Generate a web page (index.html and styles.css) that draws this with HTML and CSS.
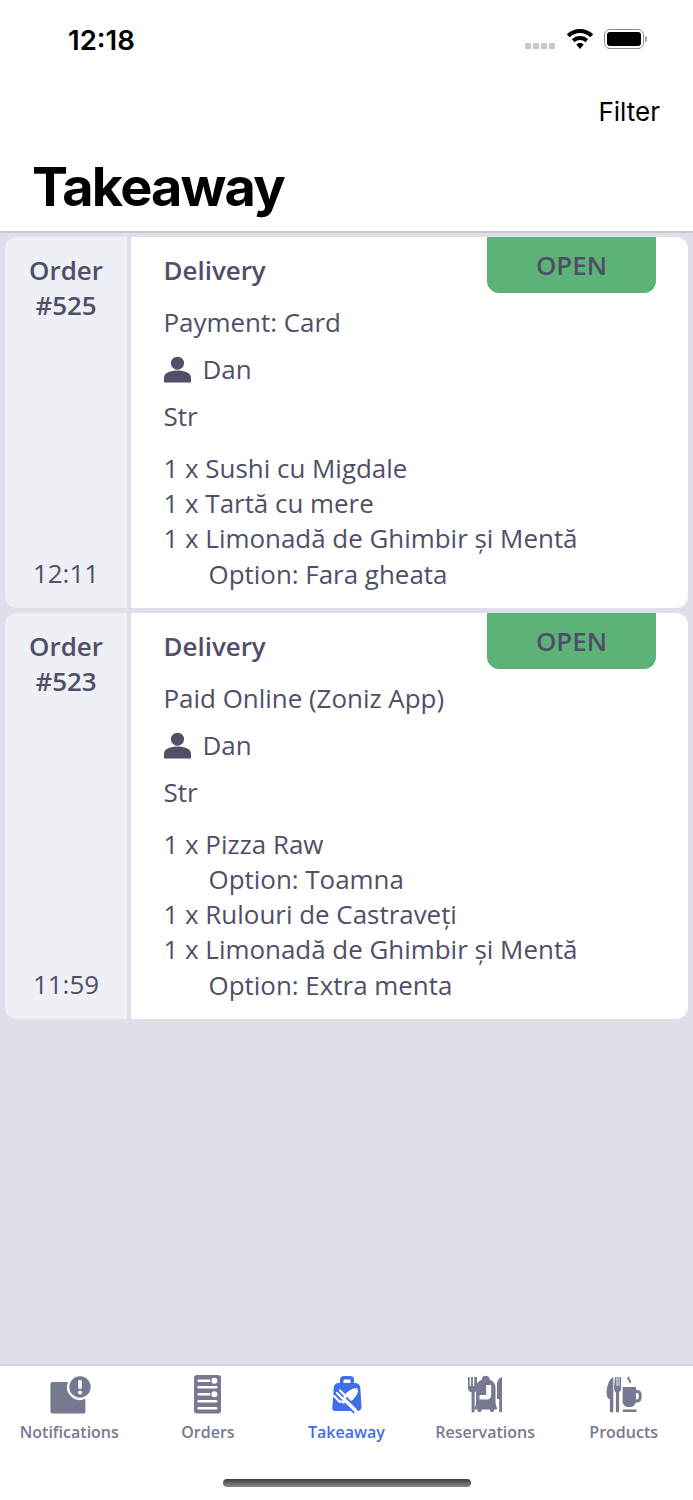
FILE: index.html
```html
<!DOCTYPE html>
<html lang="ro">
<head>
    <meta charset="UTF-8">
    <meta name="viewport" content="width=device-width, initial-scale=1.0">
    <title>Takeaway</title>
    <link rel="stylesheet" href="styles.css">
</head>
<body>

    <header class="top">
        <div class="status-bar">
            <span class="clock">12:18</span>
            <div class="status-icons">
                <div class="signal"><i></i><i></i><i></i><i></i></div>
                <svg class="wifi" width="28" height="20" viewBox="0 0 28 20">
                    <path d="M14 0C8.800 0 4.200 2 .8 5.300l2.900 3C6.400 5.700 10 4.100 14 4.100s7.600 1.600 10.300 4.200l2.900-3C23.800 2 19.200 0 14 0z"/>
                    <path d="M14 7c-3.200 0-6.100 1.200-8.200 3.300l2.900 3C10 11.900 11.900 11.100 14 11.100s4 .8 5.300 2.200l2.900-3C20.100 8.200 17.200 7 14 7z"/>
                    <path d="M14 14c-1.500 0-2.800.6-3.700 1.500L14 20l3.700-4.500C16.800 14.600 15.500 14 14 14z"/>
                </svg>
                <div class="battery"><div class="battery-fill"></div></div>
            </div>
        </div>
        <div class="filter-row">Filter</div>
        <h1>Takeaway</h1>
    </header>

    <main class="orders">
        <div class="card">
            <div class="card-side">
                <div class="order-no">Order<br>#525</div>
                <div>12:11</div>
            </div>
            <div class="card-body">
                <div class="badge">OPEN</div>
                <div class="type">Delivery</div>
                <div class="payment">Payment: Card</div>
                <div class="customer">
                    <svg width="27" height="27" viewBox="0 0 28 27"><circle cx="14" cy="7" r="6.800"/><path d="M0 27v-5c0-5 7-7.500 14-7.500s14 2.500 14 7.500v5z"/></svg>
                    Dan
                </div>
                <div class="address">Str</div>
                <div class="items">
                    <div>1 x Sushi cu Migdale</div>
                    <div>1 x Tartă cu mere</div>
                    <div>1 x Limonadă de Ghimbir și Mentă</div>
                    <div class="option">Option: Fara gheata</div>
                </div>
            </div>
        </div>

        <div class="card">
            <div class="card-side">
                <div class="order-no">Order<br>#523</div>
                <div>11:59</div>
            </div>
            <div class="card-body">
                <div class="badge">OPEN</div>
                <div class="type">Delivery</div>
                <div class="payment">Paid Online (Zoniz App)</div>
                <div class="customer">
                    <svg width="27" height="27" viewBox="0 0 28 27"><circle cx="14" cy="7" r="6.800"/><path d="M0 27v-5c0-5 7-7.500 14-7.500s14 2.500 14 7.500v5z"/></svg>
                    Dan
                </div>
                <div class="address">Str</div>
                <div class="items">
                    <div>1 x Pizza Raw</div>
                    <div class="option">Option: Toamna</div>
                    <div>1 x Rulouri de Castraveți</div>
                    <div>1 x Limonadă de Ghimbir și Mentă</div>
                    <div class="option">Option: Extra menta</div>
                </div>
            </div>
        </div>
    </main>

    <footer class="tabbar">
        <nav class="tabs">
            <div class="tab">
                <svg width="44" height="40" viewBox="0 0 44 40">
                    <path d="M5.400 7H21A13 13 0 0 0 38.400 23.800V36.500a2 2 0 0 1-2 2H5.400a2 2 0 0 1-2-2V9a2 2 0 0 1 2-2z"/>
                    <circle cx="33" cy="12" r="10.700"/>
                    <rect x="31.200" y="5" width="3.600" height="9" rx="1.300" fill="#fff"/>
                    <circle cx="33" cy="17.500" r="2" fill="#fff"/>
                </svg>
                <span>Notifications</span>
            </div>
            <div class="tab">
                <svg width="44" height="40" viewBox="0 0 44 40">
                    <rect x="8" y="0" width="27" height="38.500" rx="3"/>
                    <g fill="#fff">
                        <rect x="11.400" y="4.400" width="13" height="2.600" rx="1.300"/>
                        <circle cx="28.400" cy="5.700" r="3"/>
                        <rect x="11.400" y="11" width="20" height="2.600" rx="1.300"/>
                        <rect x="11.400" y="18" width="13" height="2.600" rx="1.300"/>
                        <circle cx="28.400" cy="19.300" r="3"/>
                        <rect x="11.400" y="25" width="20" height="2.600" rx="1.300"/>
                        <rect x="11.400" y="32" width="20" height="2.600" rx="1.300"/>
                    </g>
                </svg>
                <span>Orders</span>
            </div>
            <div class="tab active">
                <svg width="44" height="40" viewBox="0 0 44 40">
                    <path d="M16 8V5a4 4 0 0 1 4-4h6a4 4 0 0 1 4 4v3h1.500c2.500 0 4.300 1.700 4.700 4l1.300 19c.3 3-1.500 5-4.500 5H12c-3 0-4.800-2-3.500-5l1.300-19c.4-2.300 2.200-4 4.700-4zM19.500 8h7V5.500a1 1 0 0 0-1-1h-5a1 1 0 0 0-1 1z" fill-rule="evenodd"/>
                    <path d="M33 13c-5 0-12 4-14.500 11l-.5 4 3 2c6-3 12-8 13-14z" fill="#fff"/>
                    <path d="M20 24l12 12" stroke="#3f6fe8" stroke-width="7" fill="none"/>
                    <g stroke="#fff" fill="none" stroke-linecap="round">
                        <path d="M20 24l11.500 11.500" stroke-width="3.400"/>
                        <path d="M10 21l6 6M13 18l6 6M16 15.500l6 6" stroke-width="2.200"/>
                        <path d="M14.500 26l5.500 1" stroke-width="2.200"/>
                    </g>
                </svg>
                <span>Takeaway</span>
            </div>
            <div class="tab">
                <svg width="44" height="40" viewBox="0 0 44 40">
                    <path d="M5 2h1.700v9h1.400V2h1.800v9h1.400V2H14v11c0 2-1 3.500-2.400 4.500V36a1.500 1.500 0 0 1-3 0V17.500C6 16.500 5 15 5 13z"/>
                    <path d="M39 2v35h-2.800V24H34V9c0-3 2-6 5-7z"/>
                    <path d="M23.500 1a3.300 3.300 0 0 1 3.200 3.800c3.300 1 5.800 4 5.800 8V26c0 3 .6 5.200 1.500 6.800.4 1 0 1.700-1 1.700h-1.700l-.9 2.500h-2.600l-1-2.500h-8l-1 2.500h-2.600l-.9-2.500h-1.700c-1 0-1.400-.7-1-1.700.9-1.600 1.500-3.800 1.500-6.800V12.800c0-4 2.500-7 5.800-8A3.300 3.300 0 0 1 23.500 1z"/>
                    <path d="M23.200 10h5v9.500c0 2.800-1.400 5-4.500 5h-7.200v-4.500h6.700z" fill="#fff"/>
                </svg>
                <span>Reservations</span>
            </div>
            <div class="tab">
                <svg width="44" height="40" viewBox="0 0 44 40">
                    <path d="M11.300 2v34a1.700 1.700 0 0 1-3.400 0V24C6 24 4.600 22 4.600 18c0-7 2.500-14 6.700-16z"/>
                    <path d="M13 2h1.500v9h.9V2h1.200v9h.9V2h1.600v11c0 2-.8 3.300-2 4.200V36a1.600 1.600 0 0 1-3.200 0V17.200c-1.200-.9-1.900-2.200-1.900-4.200z"/>
                    <path d="M20.600 12H34v3h1c3 0 4.600 1.700 4.600 4.500v3c0 3-2 5-4.600 5h-1.200c-.7 2.700-2.800 4.500-5.800 4.500h-2c-3 0-5.400-2.500-5.400-6zM34 18v6.500h.6c1.400 0 2.200-1 2.200-2.400v-1.700c0-1.500-.8-2.400-2.200-2.400z" fill-rule="evenodd"/>
                    <rect x="20.600" y="34.500" width="14" height="2.400" rx="1"/>
                    <path d="M27.500 2c-1.800 1-1.800 2 -.4 2.800s1.400 2.200 0 3" fill="none" stroke="#777990" stroke-width="1.800"/>
                </svg>
                <span>Products</span>
            </div>
        </nav>
        <div class="home-indicator"></div>
    </footer>

</body>
</html>
```

FILE: styles.css
```css
* {
    box-sizing: border-box;
}
body {
    margin: 0;
    min-height: 100vh;
    display: flex;
    flex-direction: column;
    font-family: "Open Sans", sans-serif;
    font-size: 25.93px;
    line-height: 35px;
    color: #4f4f68;
    background-color: #dfdfea;
}

/* header */
.top {
    height: 233px;
    background: white;
    border-bottom: 2px solid #c9c9d3;
    color: black;
    font-family: Inter, sans-serif;
}
.status-bar {
    height: 78px;
    padding-top: 22px;
    padding-left: 68px;
    padding-right: 49px;
    display: flex;
    justify-content: space-between;
    align-items: flex-start;
}
.clock {
    font-size: 27.5px;
    line-height: 36px;
    font-weight: 600;
}
.status-icons {
    display: flex;
    align-items: center;
    gap: 10px;
    padding-top: 7px;
}
.signal {
    display: flex;
    gap: 2px;
    padding-top: 13px;
    margin-right: 1px;
}
.signal i {
    width: 6px;
    height: 6px;
    border-radius: 1px;
    background: #c8c8c8;
}
.battery {
    position: relative;
    width: 40px;
    height: 20px;
    padding: 2px;
    border: 1px solid #8e8e8e;
    border-radius: 6px;
}
.battery::after {
    content: "";
    position: absolute;
    right: -4px;
    top: 6px;
    width: 2px;
    height: 6px;
    border-radius: 0 2px 2px 0;
    background: #a0a0a0;
}
.battery-fill {
    height: 100%;
    border-radius: 3px;
    background: black;
}
.filter-row {
    padding-right: 33px;
    text-align: right;
    font-size: 26px;
    line-height: 34px;
    padding-top: 17px;
}
h1 {
    margin: 0;
    padding-left: 32px;
    padding-top: 25px;
    font-size: 54px;
    line-height: 66px;
    letter-spacing: -1.8px;
    font-weight: 700;
}

/* orders */
.orders {
    flex: 1;
    padding: 4px 5px 0;
    display: flex;
    flex-direction: column;
    gap: 5px;
}
.card {
    display: flex;
    gap: 4px;
    border-radius: 12px;
    overflow: hidden;
}
.card-side {
    width: 122px;
    flex-shrink: 0;
    padding: 16px 0 17px;
    display: flex;
    flex-direction: column;
    justify-content: space-between;
    text-align: center;
    background: #eff0f6;
}
.order-no {
    font-weight: 600;
}
.card-body {
    position: relative;
    flex: 1;
    padding: 16px 32.5px;
    background: white;
}
.badge {
    position: absolute;
    top: 0;
    right: 32px;
    width: 169px;
    height: 56px;
    line-height: 56px;
    text-align: center;
    border-radius: 0 0 12px 12px;
    background: #5db377;
    font-weight: 600;
}
.type {
    font-weight: 600;
}
.payment {
    margin-top: 17px;
}
.customer {
    margin-top: 12px;
    display: flex;
    align-items: center;
    gap: 12px;
}
.customer svg {
    display: block;
    fill: #4f4f68;
}
.address {
    margin-top: 12px;
}
.items {
    margin-top: 17px;
    line-height: 35.2px;
}
.option {
    padding-left: 45px;
}

/* tab bar */
.tabbar {
    height: 136px;
    background: white;
    border-top: 2px solid #d3d3dc;
}
.tabs {
    display: flex;
    padding-top: 9px;
}
.tab {
    flex: 1;
    display: flex;
    flex-direction: column;
    align-items: center;
    font-size: 16px;
    line-height: 23px;
    font-weight: 600;
    color: #777990;
}
.tab svg {
    display: block;
    fill: #777990;
    margin-bottom: 6px;
}
.tab.active {
    color: #3f6fe8;
}
.tab.active svg {
    fill: #3f6fe8;
}
.home-indicator {
    width: 248px;
    height: 8px;
    margin: 35px auto 0;
    border-radius: 4px;
    background: linear-gradient(#3c3c3c, #8a8a8a);
}
```
